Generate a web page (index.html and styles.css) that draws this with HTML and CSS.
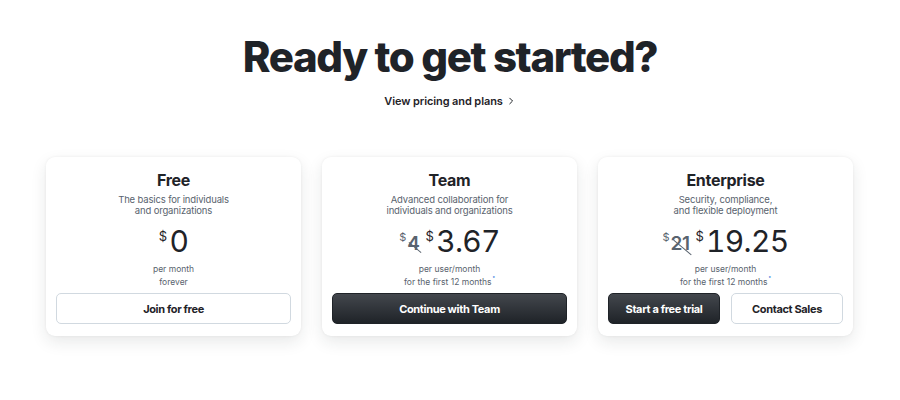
FILE: index.html
```html
<!DOCTYPE html>
<html>
<head>
<meta charset="utf-8">
<link rel="stylesheet" href="styles.css">
</head>
<body>
<section class="hero">
  <h1 class="title">Ready to get started?</h1>
  <a class="plans-link" href="#">View pricing and plans <svg class="chev" viewBox="0 0 16 16" width="10" height="10"><path d="M6 3.5l4.5 4.5L6 12.5" fill="none" stroke="currentColor" stroke-width="1.6" stroke-linecap="round" stroke-linejoin="round"/></svg></a>
</section>
<section class="cards">
  <div class="card">
    <h2 class="card-title">Free</h2>
    <p class="desc">The basics for individuals<br>and organizations</p>
    <div class="price-row">
      <span class="price"><span class="cur">$</span>0</span>
    </div>
    <p class="note first">per month</p>
    <p class="note">forever</p>
    <div class="actions">
      <a class="btn btn-light" href="#">Join for free</a>
    </div>
  </div>
  <div class="card">
    <h2 class="card-title">Team</h2>
    <p class="desc">Advanced collaboration for<br>individuals and organizations</p>
    <div class="price-row">
      <span class="old"><span class="cur-old">$</span><span class="struck">4</span></span>
      <span class="price"><span class="cur">$</span>3.67</span>
    </div>
    <p class="note first">per user/month</p>
    <p class="note">for the first 12 months<sup class="ast">*</sup></p>
    <div class="actions">
      <a class="btn btn-dark" href="#">Continue with Team</a>
    </div>
  </div>
  <div class="card">
    <h2 class="card-title">Enterprise</h2>
    <p class="desc">Security, compliance,<br>and flexible deployment</p>
    <div class="price-row">
      <span class="old"><span class="cur-old">$</span><span class="struck">21</span></span>
      <span class="price"><span class="cur">$</span>19.25</span>
    </div>
    <p class="note first">per user/month</p>
    <p class="note">for the first 12 months<sup class="ast">*</sup></p>
    <div class="actions">
      <a class="btn btn-dark" href="#">Start a free trial</a>
      <a class="btn btn-light" href="#">Contact Sales</a>
    </div>
  </div>
</section>
</body>
</html>
```
FILE: styles.css
```css
* { box-sizing: border-box; }
html, body { margin: 0; padding: 0; background: #fff; }
body {
  font-family: Inter, "Noto Sans", "Liberation Sans", sans-serif;
  color: #1f2328;
  width: 900px;
  height: 400px;
  overflow: hidden;
}
.hero {
  display: flex;
  flex-direction: column;
  align-items: center;
  padding-top: 32px;
}
.title {
  margin: 0;
  font-size: 42px;
  line-height: 50px;
  font-weight: 800;
  letter-spacing: -1.4px;
  color: #1f2328;
}
.plans-link {
  margin-top: 12px;
  display: flex;
  align-items: center;
  gap: 3px;
  font-size: 11px;
  font-weight: 600;
  color: #1f2328;
  text-decoration: none;
  letter-spacing: -0.1px;
}
.chev { display: block; }
.cards {
  display: flex;
  gap: 21px;
  padding: 0 46px;
  margin-top: 49px;
}
.card {
  width: 255px;
  height: 179px;
  background: #fff;
  border-radius: 9px;
  box-shadow: 0 6px 16px rgba(31, 35, 40, 0.10), 0 0 3px rgba(31, 35, 40, 0.06);
  display: flex;
  flex-direction: column;
  align-items: center;
  padding: 13px 10px 12px;
}
.card-title {
  margin: 0;
  font-size: 16px;
  line-height: 20px;
  font-weight: 700;
  letter-spacing: -0.3px;
}
.desc {
  margin: 5px 0 0;
  font-size: 9.5px;
  line-height: 10.5px;
  color: #59636e;
  text-align: center;
  letter-spacing: -0.15px;
}
.price-row {
  display: flex;
  align-items: flex-start;
  gap: 6px;
  margin-top: 8px;
  height: 34px;
}
.price {
  display: flex;
  align-items: flex-start;
  font-size: 30px;
  line-height: 34px;
  font-weight: 400;
  color: #1f2328;
  letter-spacing: -0.7px;
  font-variant-numeric: tabular-nums;
}
.cur {
  font-size: 13px;
  line-height: 16px;
  margin-right: 3px;
  margin-top: 4px;
}
.old {
  display: flex;
  align-items: flex-start;
  color: #59636e;
  margin-top: 7px;
}
.cur-old {
  font-size: 11px;
  line-height: 12px;
  margin-right: 1px;
  margin-top: 0;
}
.struck {
  position: relative;
  font-size: 19px;
  line-height: 22px;
  font-weight: 600;
  margin-top: 2px;
  letter-spacing: -0.5px;
}
.struck::after {
  content: "";
  position: absolute;
  left: 0;
  right: -4px;
  top: 62%;
  height: 1px;
  background: #59636e;
  transform: rotate(40deg);
  transform-origin: center;
}
.note {
  margin: 0;
  font-size: 8.5px;
  line-height: 13px;
  color: #59636e;
}
.note.first { margin-top: 5px; }
.ast {
  font-size: 5px;
  color: #0969da;
  vertical-align: top;
  line-height: 5px;
  margin-left: 1px;
}
.actions {
  margin-top: auto;
  width: 100%;
  display: flex;
  gap: 11px;
}
.btn {
  flex: 1;
  height: 31px;
  border-radius: 5px;
  display: flex;
  align-items: center;
  justify-content: center;
  font-size: 11px;
  font-weight: 700;
  letter-spacing: -0.35px;
  text-decoration: none;
}
.btn-light {
  background: #fff;
  color: #1f2328;
  border: 1px solid #d1d9e0;
}
.btn-dark {
  background: linear-gradient(180deg, #43474d 0%, #1f2328 100%);
  color: #fff;
  border: 1px solid #1f2328;
}
```
